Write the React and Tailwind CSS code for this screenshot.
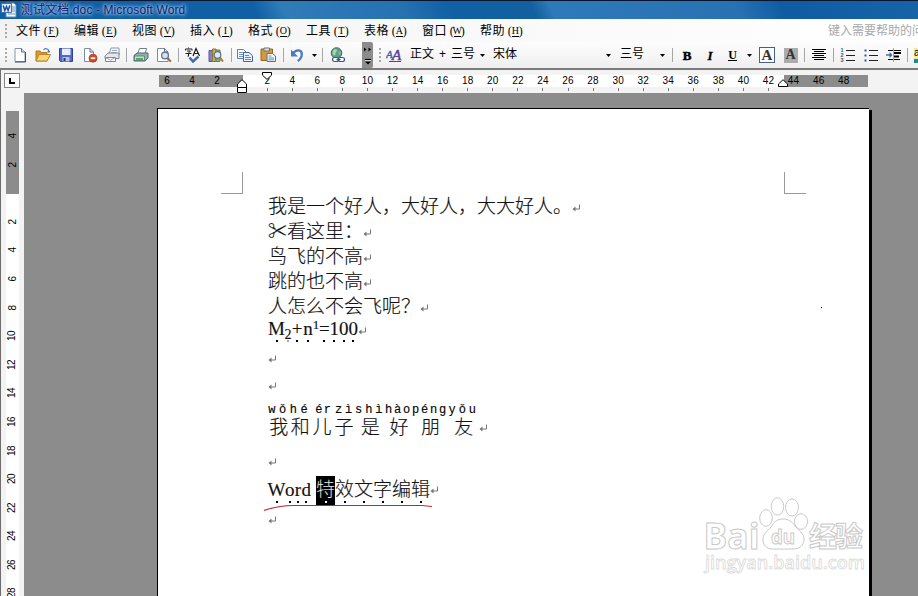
const UI_FONT = "font-['Liberation_Sans','Noto_Sans_CJK_SC',sans-serif]";
const DOC_FONT = "font-['Liberation_Serif','Noto_Sans_CJK_SC',serif]";

const menus = [
  { label: "文件", key: "F" },
  { label: "编辑", key: "E" },
  { label: "视图", key: "V" },
  { label: "插入", key: "I" },
  { label: "格式", key: "O" },
  { label: "工具", key: "T" },
  { label: "表格", key: "A" },
  { label: "窗口", key: "W" },
  { label: "帮助", key: "H" },
];

const hRuler = [6, 4, 2, 0];
for (let n = 2; n <= 48; n += 2) hRuler.push(n);

const vRuler = [4, 2, 0];
for (let n = 2; n <= 28; n += 2) vRuler.push(n);

const pinyin = [
  { char: "我", py: ["w", "ǒ"], width: "w-[21.5px]" },
  { char: "和", py: ["h", "é"], width: "w-[21.5px]" },
  { char: "儿", py: ["é", "r"], width: "w-[22px]", shift: "pl-[5px]" },
  { char: "子", py: ["z", "ì"], width: "w-[22px]", shift: "pl-[2px]" },
  { char: "是", py: ["s", "h", "ì"], width: "w-[30.5px]" },
  { char: "好", py: ["h", "à", "o"], width: "w-[27px]" },
  { char: "朋", py: ["p", "é", "n", "g"], width: "w-[36px]" },
  { char: "友", py: ["y", "ǒ", "u"], width: "w-[30.5px]" },
];

const Icon = ({ children, className = "w-4 h-4" }) => (
  <svg viewBox="0 0 16 16" className={`${className} shrink-0`} fill="none">
    {children}
  </svg>
);

const Slot = ({ w, children }) => (
  <div className={`${w} h-full shrink-0 flex items-center justify-center`}>
    {children}
  </div>
);

const Sep = () => <div className="w-px h-[14px] shrink-0 bg-[#a5a5a5]" />;

const Grip = () => (
  <div className="flex flex-col gap-[2px] shrink-0">
    {[0, 1, 2, 3].map((i) => (
      <div key={i} className="w-[2px] h-[2px] bg-[#a8a8a8]" />
    ))}
  </div>
);

const Arrow = () => (
  <svg viewBox="0 0 5 3" className="w-[5px] h-[3px] shrink-0">
    <path d="M0 0h5L2.5 3z" fill="#000" />
  </svg>
);

const TitleBar = () => (
  <div className="h-[19px] shrink-0 border-t border-[#06142e] bg-[linear-gradient(65deg,#1160a5_0%,#1160a5_28%,#2f7cb9_31%,#2671b0_44%,#1160a5_49%,#12609f_58%,#2e79b7_60%,#2872b3_80%,#0f5ca2_85%,#1663a8_100%)] flex items-center">
    <svg viewBox="0 0 16 16" className="w-4 h-4 ml-px shrink-0">
      <path d="M5 1h8l2 2v12H5z" fill="#f4f9ff" stroke="#6188b2" />
      <path d="M11 5h3M11 7h3M11 9h3M7 12h7" stroke="#6f91b5" />
      <path d="M.5 1.5h10v9H.5z" fill="#dcecfb" stroke="#3e73aa" />
      <path
        d="M2.2 3.5l1.6 5 1.7-4 1.6 4 1.7-5"
        stroke="#1d4a8e"
        strokeWidth="1.4"
        fill="none"
      />
    </svg>
    <span className="ml-1 text-[12px] leading-none tracking-[0.1px] whitespace-pre text-[#081a6b] [text-shadow:0_0_2px_#a9c9ec,0_0_4px_#a9c9ec,0_0_4px_#8fbbe6]">
      测试文档.doc - Microsoft Word
    </span>
  </div>
);

const MenuBar = () => (
  <div className="h-[23px] shrink-0 flex items-center pl-[5px] bg-gradient-to-r from-[#f2f2f2] to-white text-[12px] leading-none text-black">
    <Grip />
    <div className="flex ml-[9px]">
      {menus.map((m) => (
        <div key={m.key} className="w-[58px] flex items-center">
          <span className="tracking-[0.4px]">{m.label}</span>
          <span className="flex ml-[3px] font-['Liberation_Serif'] text-[12px]">
            <span className="w-[4px] text-center">(</span>
            <span className="w-[7px] flex justify-center border-b border-black h-[12px] text-[10px] leading-[12px]">
              {m.key}
            </span>
            <span className="w-[4px] text-center">)</span>
          </span>
        </div>
      ))}
    </div>
    <span className="ml-[290px] text-[#a9a9a9] whitespace-nowrap">
      键入需要帮助的问题
    </span>
  </div>
);

const Toolbar = () => (
  <div className="h-[26px] shrink-0 flex items-center bg-gradient-to-b from-[#fdfdfd] to-[#efefef] text-black overflow-hidden">
    <div className="w-2 pl-[5px] shrink-0">
      <Grip />
    </div>
    <Slot w="w-[23px]">
      <Icon>
        <path d="M3 1.5h6.5l3.5 3.5v9.5H3z" fill="#fff" stroke="#8494ad" />
        <path d="M13.5 5v10H3" stroke="#3d4d68" />
        <path d="M9.5 1.5V5H13" stroke="#60718e" fill="#d6dfec" />
      </Icon>
    </Slot>
    <Slot w="w-[24px]">
      <Icon>
        <path d="M1 14V4h4l1.5 1.5H12V14z" fill="#d99a2b" stroke="#b47b1d" />
        <path d="M1 14l3-6.5h11.5L12 14z" fill="#fbd677" stroke="#b9862a" />
        <path d="M8.5 3c1.5-2 4.5-1.6 5.3 1" stroke="#3f76ba" strokeWidth="1.2" />
        <path d="M12 4h3.4l-1.6 2z" fill="#3f76ba" />
      </Icon>
    </Slot>
    <Slot w="w-[22px]">
      <Icon>
        <path d="M1.5 1.5h13v13h-12l-1-1z" fill="#5468c8" stroke="#3141a0" />
        <path d="M4 1.5h8.5V8H4z" fill="#e9eefc" />
        <path d="M4.5 10h7v4.5h-7z" fill="#b9c2d8" />
        <path d="M5.5 11h2v3h-2z" fill="#26337c" />
      </Icon>
    </Slot>
    <Slot w="w-[25px]">
      <Icon>
        <path d="M2.5 1.5H8L11.5 5v9.5h-9z" fill="#fff" stroke="#7d8ca5" />
        <path d="M8 1.5V5h3.5" stroke="#5f6f8b" />
        <circle cx="11" cy="11.2" r="4" fill="#d94a26" stroke="#a5321a" strokeWidth=".7" />
        <path d="M8.8 11.2h4.4" stroke="#fff" strokeWidth="1.7" />
      </Icon>
    </Slot>
    <Slot w="w-[20px]">
      <Icon>
        <path d="M5 7l2-6h8v7z" fill="#f6f8fb" stroke="#8d97a6" />
        <path d="M8 3.5h5M7.5 5.5h5" stroke="#9aa9bb" />
        <path d="M1 9l3-3h11v5.5H1z" fill="#e4e7ec" stroke="#7d8795" />
        <path d="M1.5 10.5h10v4h-10z" fill="#fff" stroke="#7d8795" />
        <path d="M1.5 10.5l5 2.7 5-2.7" stroke="#9aa1ad" />
      </Icon>
    </Slot>
    <div className="w-1 shrink-0" />
    <Sep />
    <Slot w="w-[27px]">
      <Icon>
        <path d="M4.5 7l2-5.5h7L12 7z" fill="#fff" stroke="#6f7f8e" />
        <path d="M1 8.5L4 6h11v5l-3 3H1z" fill="#8fb5ae" stroke="#476a68" />
        <path d="M1.5 9h10v4.5h-10z" fill="#c5dcd6" stroke="#476a68" strokeWidth=".7" />
        <path d="M3 12h7" stroke="#35a03a" strokeWidth="1.6" />
      </Icon>
    </Slot>
    <Slot w="w-[20px]">
      <Icon>
        <path d="M1.5 1.5h7L12 5v9.5H1.5z" fill="#fff" stroke="#7d8ca5" />
        <path d="M8.5 1.5V5H12" stroke="#5f6f8b" />
        <circle cx="9" cy="8.5" r="3.4" fill="#cfe3f2" stroke="#5d7082" strokeWidth="1.2" />
        <path d="M11.5 11l3.3 3.6" stroke="#9b6a3c" strokeWidth="2" />
      </Icon>
    </Slot>
    <div className="w-1 shrink-0" />
    <Sep />
    <Slot w="w-[27px]">
      <Icon>
        <path
          d="M3.5 0.5v1M.5 3.5V2h6.5v1.5M2 4h3.5L3.5 6v3.2H2.500M.5 6.500h6"
          stroke="#1c1c1c"
        />
        <path d="M8 9l3-7.500L14.500 9M9 6.500h4.500" stroke="#1c1c1c" strokeWidth="1.2" />
        <path d="M4.500 10.500l3.500 4 5.500-5" stroke="#3c6aa8" strokeWidth="2.4" />
      </Icon>
    </Slot>
    <Slot w="w-[19px]">
      <Icon>
        <path d="M1 3.500h3.500v11H1z" fill="#8582c4" stroke="#5b58a0" />
        <path d="M4.500 2h3.500v12.500H4.500z" fill="#c9ad62" stroke="#8d7432" />
        <path d="M8 3h4v11.500H8z" fill="#8fae7c" stroke="#62814f" />
        <circle cx="9.500" cy="8" r="3.300" fill="#dcecf5" stroke="#5f6f80" strokeWidth="1.200" />
        <path d="M12 10.500l3 4" stroke="#a87a35" strokeWidth="2" />
      </Icon>
    </Slot>
    <div className="w-[6px] shrink-0" />
    <Sep />
    <Slot w="w-[26px]">
      <Icon>
        <path d="M.5 2.500h6l3 3v6h-9z" fill="#fff" stroke="#5a7db8" />
        <path d="M2 5.500h4M2 7.500h5M2 9.500h4" stroke="#6f92cb" />
        <path d="M6.500 5.500h5.500l3.500 3.300v5.700h-9z" fill="#eef4ff" stroke="#3f66aa" />
        <path d="M8 8.500h4M8 10.500h6M8 12.500h6" stroke="#5f86c6" />
      </Icon>
    </Slot>
    <Slot w="w-[20px]">
      <Icon>
        <path d="M1 2h11.500v11.500H1z" fill="#d59a35" stroke="#96661b" />
        <path d="M4 1h5.500v3H4z" fill="#dfe3ea" stroke="#6c7078" />
        <path d="M7 6.500h5.500L15.500 9v5.500H7z" fill="#f4f8ff" stroke="#5a6d93" />
        <path d="M8.500 9h3M8.500 11h5.500M8.500 12.800h5.500" stroke="#6f8dc0" />
      </Icon>
    </Slot>
    <div className="w-[5px] shrink-0" />
    <Sep />
    <Slot w="w-[26px]">
      <Icon>
        <path
          d="M4 6.500C7 2 13 2.500 12.800 7.500c-.1 2.800-1.800 5-4 6.500"
          stroke="#4a7cc4"
          strokeWidth="2.300"
        />
        <path d="M2 2.500v7h7z" fill="#4a7cc4" />
      </Icon>
    </Slot>
    <Slot w="w-2">
      <Arrow />
    </Slot>
    <div className="w-1 shrink-0" />
    <Sep />
    <Slot w="w-[28px]">
      <Icon>
        <circle cx="7.500" cy="6" r="5.300" fill="#5f9f8a" stroke="#37705f" />
        <path d="M4 3.500c2-2 4-1.500 4 0S6 5 6.500 7 4 8.500 3.500 7z" fill="#a9d6a8" />
        <path d="M9.500 4c1.500 0 2.500 1 2.300 3L10 8z" fill="#84b9cf" />
        <rect x="3.500" y="10.500" width="6" height="4" rx="2" fill="#fff" stroke="#39537a" strokeWidth="1.200" />
        <rect x="9.500" y="10.500" width="6" height="4" rx="2" fill="#fff" stroke="#39537a" strokeWidth="1.200" />
        <path d="M7.500 12.500h4" stroke="#39537a" strokeWidth="1.200" />
      </Icon>
    </Slot>
    <div className="w-[11px] shrink-0" />
    <div className="w-[11px] h-full shrink-0 bg-[#8c8c8c] rounded-r-[2px]">
      <svg viewBox="0 0 11 26" className="w-[11px] h-[26px]">
        <path d="M2 5.500l2.500 2L2 9.500zM6.500 5.500l2.500 2-2.500 2z" fill="#000" />
        <path d="M3 17.500h6" stroke="#000" strokeWidth="1.200" />
        <path d="M3 19.500h6l-3 3z" fill="#000" />
        <path d="M3 18.600h6" stroke="#fff" strokeWidth=".8" />
      </svg>
    </div>
    <div className="w-[4px] shrink-0" />
    <div className="w-[4px] shrink-0 pl-[2px]">
      <Grip />
    </div>
    <Slot w="w-[26px]">
      <svg viewBox="0 0 16 16" className="w-4 h-4">
        <text x="0" y="11" fontSize="11" fontStyle="italic" fontFamily="Liberation Serif" fill="#3f62a5" stroke="#3f62a5" strokeWidth=".4">
          A
        </text>
        <text x="6" y="13" fontSize="15" fontStyle="italic" fontFamily="Liberation Serif" fill="#5a3f96" stroke="#5a3f96" strokeWidth=".5">
          A
        </text>
        <path d="M3 14.500h12" stroke="#5a3f96" />
      </svg>
    </Slot>
    <div className="w-[3px] shrink-0" />
    <div className="w-[65px] shrink-0 flex justify-between pb-[3px] text-[12px] leading-none">
      <span>正文</span>
      <span>+</span>
      <span>三号</span>
    </div>
    <Slot w="w-[15px]">
      <Arrow />
    </Slot>
    <div className="w-[112px] shrink-0 pl-[3px] pb-[3px] text-[12px] leading-none">
      宋体
    </div>
    <Slot w="w-3">
      <Arrow />
    </Slot>
    <div className="w-[42px] shrink-0 pl-[6px] pb-[3px] text-[12px] leading-none">
      三号
    </div>
    <Slot w="w-3">
      <Arrow />
    </Slot>
    <div className="w-1 shrink-0" />
    <Sep />
    <Slot w="w-[28px]">
      <b className="font-['Liberation_Serif'] text-[13px] leading-none [-webkit-text-stroke:0.5px_#000]">
        B
      </b>
    </Slot>
    <Slot w="w-[18px]">
      <b className="font-['Liberation_Serif'] text-[13px] leading-none italic [-webkit-text-stroke:0.3px_#000]">
        I
      </b>
    </Slot>
    <Slot w="w-[27px]">
      <b className="font-['Liberation_Serif'] text-[12px] leading-[10px] border-b border-black">
        U
      </b>
    </Slot>
    <Slot w="w-[7px]">
      <Arrow />
    </Slot>
    <div className="w-1 shrink-0" />
    <Slot w="w-[20px]">
      <b className="w-4 h-4 border border-[#44618d] bg-white flex items-center justify-center font-['Liberation_Serif'] text-[15px] leading-none text-[#333]">
        A
      </b>
    </Slot>
    <Slot w="w-[27px]">
      <b className="w-[14px] h-[15px] bg-[#acacac] flex items-center justify-center font-['Liberation_Serif'] text-[14px] leading-none text-[#333]">
        A
      </b>
    </Slot>
    <Sep />
    <Slot w="w-[28px]">
      <Icon>
        <path d="M1 2.500h14M3 4.500h10M1 6.500h14M3 8.500h10M1 10.500h14M3 12.500h10" stroke="#000" />
      </Icon>
    </Slot>
    <Sep />
    <Slot w="w-[27px]">
      <Icon>
        <path d="M6 3.500h9M6 8.500h9M6 13.500h9" stroke="#222" />
        <g fontSize="5.500" fontFamily="Liberation Sans" fontWeight="bold" fill="#33588f">
          <text x="0.500" y="5">1</text>
          <text x="0.500" y="10">2</text>
          <text x="0.500" y="15">3</text>
        </g>
      </Icon>
    </Slot>
    <Slot w="w-[20px]">
      <Icon>
        <path d="M6 3.500h9M6 8.500h9M6 13.500h9" stroke="#222" />
        <path d="M1.500 2.500h2v2h-2zM1.500 7.500h2v2h-2zM1.500 12.500h2v2h-2z" fill="#33588f" />
      </Icon>
    </Slot>
    <Slot w="w-[26px]">
      <Icon>
        <path d="M2 3.500h5M8 3.500h7M2 12.500h5M8 12.500h6" stroke="#000" />
        <path d="M8 6h7M8 9.500h5" stroke="#000" strokeWidth="1.800" />
        <path d="M0 8h4" stroke="#3c66a3" strokeWidth="1.400" />
        <path d="M3.500 5l3 3-3 3z" fill="#3c66a3" />
        <path d="M7.500 1.500v13" stroke="#555" strokeDasharray="1 1" />
      </Icon>
    </Slot>
    <Sep />
    <div className="ml-[6px] w-4 h-[15px] shrink-0 bg-[#f0ec9c] border-b-4 border-[#1f8a8a] text-[10px] leading-none">
      a
    </div>
  </div>
);

const HorizontalRuler = () => (
  <div className="h-[23px] shrink-0 flex items-start bg-[#f3f3f3] border-l border-[#6d6d6d]">
    <div className="ml-[3px] mt-[3px] w-4 h-[15px] shrink-0 border border-[#858585] bg-[#fbfbfb] flex items-center justify-center">
      <div className="w-[6px] h-[6px] border-l-2 border-b-2 border-black" />
    </div>
    <div className="relative ml-[139px] mt-[5px] w-[709px] h-3 shrink-0 bg-[linear-gradient(90deg,#8c8c8c_84px,#fff_84px,#fff_625px,#8c8c8c_625px)]">
      <div className="flex -ml-[4.5px]">
        {hRuler.map((n, i) => (
          <div
            key={i}
            className="w-[25.07px] shrink-0 flex flex-col items-center text-[10px] leading-[12px] tracking-[0.2px] text-black"
          >
            <span className="h-3">{n === 0 ? "" : n}</span>
            {i > 3 && i < 25 && <div className="mt-px w-px h-[3px] bg-[#777]" />}
          </div>
        ))}
      </div>
      {/* indent markers */}
      <svg viewBox="0 0 10 14" className="absolute left-[78px] top-[4px] w-[10px] h-[14px]">
        <path d="M.5 8.500V5L5 .7 9.500 5v8.500h-9zM.5 8.500h9" fill="#fff" stroke="#000" />
      </svg>
      <svg viewBox="0 0 10 8" className="absolute left-[103px] -top-[3px] w-[10px] h-2">
        <path d="M.5.5h9v2.700L5 7.400.5 3.200z" fill="#fff" stroke="#000" />
      </svg>
      <svg viewBox="0 0 10 8" className="absolute left-[619px] top-[4px] w-[10px] h-2">
        <path d="M.5 7.500V5L5 .7 9.500 5v2.500z" fill="#fff" stroke="#000" />
      </svg>
    </div>
  </div>
);

const VerticalRuler = () => (
  <div className="w-6 shrink-0 bg-[#f3f3f3] border-l border-[#6d6d6d] pl-[5px]">
    <div className="mt-[18px] w-[13px] h-[485px] overflow-hidden bg-[linear-gradient(180deg,#8c8c8c_83px,#fff_83px)] pt-[10.7px]">
      {vRuler.map((n, i) => (
        <div key={i} className="h-[28.6px] flex items-center justify-center">
          <span className="-rotate-90 text-[10px] leading-none tracking-[-0.5px] text-black">
            {n === 0 ? "" : n}
          </span>
        </div>
      ))}
    </div>
  </div>
);

const Return = ({ className = "" }) => (
  <svg viewBox="0 0 8 8" className={`w-2 h-2 shrink-0 ${className}`}>
    <path d="M7.500.5v4.500h-6" fill="none" stroke="#777" />
    <path d="M3.500 2.500v5L.5 5z" fill="#777" />
  </svg>
);

const Line = ({ text }) => (
  <div className="h-[25px] flex items-center">
    <span className="whitespace-nowrap pt-px">{text}</span>
    <Return className="mt-1" />
  </div>
);

// character with an emphasis dot beneath
const Dotted = ({ children, w, className = "", dot = "bg-black" }) => (
  <span className={`${w} flex flex-col items-center justify-center shrink-0 ${className}`}>
    <span className="h-[22px] leading-[22px]">{children}</span>
    <span className={`w-[2px] h-[2px] ${dot}`} />
  </span>
);

const Brand = () => (
  <svg viewBox="0 0 170 86" className="absolute left-[544px] top-[384px] w-[170px] h-[86px]">
    <g fill="#fff" stroke="#c9c9c9" strokeWidth="1">
      <ellipse cx="64" cy="25" rx="6.300" ry="8.300" />
      <ellipse cx="75.500" cy="13.500" rx="6.200" ry="8.700" />
      <ellipse cx="90" cy="14.500" rx="6.500" ry="8.500" />
      <ellipse cx="99" cy="28.500" rx="6.500" ry="7.800" />
      <path d="M81 26c6 0 9 3 12 7 3 4 9 7 9 13 0 7-5 10-11 10H71c-7 0-10-4-10-10 0-6 5-8 8-12 3-5 6-8 12-8z" />
      <text x="1.500" y="55.500" fontSize="36" fontWeight="bold" fontFamily="Open Sans" textLength="56" lengthAdjust="spacingAndGlyphs">
        Bai
      </text>
      <text x="69" y="51" fontSize="20" fontWeight="bold" fontFamily="Open Sans" textLength="24" lengthAdjust="spacingAndGlyphs">
        du
      </text>
      <text x="107" y="53.500" fontSize="28" fontWeight="bold" fontFamily="Noto Sans CJK SC" textLength="54">
        经验
      </text>
      <text x="3" y="76" fontSize="18" fontWeight="600" fontFamily="Open Sans" stroke="#dadada" strokeWidth=".8" textLength="160" lengthAdjust="spacingAndGlyphs">
        jingyan.baidu.com
      </text>
    </g>
  </svg>
);

const Page = () => (
  <div className="relative mt-[15px] ml-[133px] w-[712px] h-[500px] shrink-0 bg-white border-l border-t border-black shadow-[3px_2px_0_0_#000]">
    {/* crop marks */}
    <div className="flex justify-between pt-[63px] px-[63px]">
      <div className="w-[22px] h-[22px] border-r border-b border-[#9a9a9a]" />
      <div className="w-[22px] h-[22px] border-l border-b border-[#9a9a9a]" />
    </div>
    <div className={`-mt-[1px] pl-[110px] text-[19px] leading-none font-light text-[#111] [-webkit-text-stroke:0.15px_#111] ${DOC_FONT}`}>
      <Line text="我是一个好人，大好人，大大好人。" />
      <Line text="✂看这里：" />
      <Line text="鸟飞的不高" />
      <Line text="跳的也不高" />
      <Line text="人怎么不会飞呢？" />

      <div className="h-[27px] flex items-start font-normal">
        <Dotted w="w-[17px]">M</Dotted>
        <Dotted w="w-[6px]" dot="bg-[#aaa]">
          <sub className="text-[14px] leading-none">2</sub>
        </Dotted>
        <Dotted w="w-[12px]">+</Dotted>
        <Dotted w="w-[10px]">n</Dotted>
        <Dotted w="w-[6px]" dot="bg-transparent">
          <sup className="text-[13px] leading-none">1</sup>
        </Dotted>
        <Dotted w="w-[10.500px]">=</Dotted>
        <Dotted w="w-[9.500px]">1</Dotted>
        <Dotted w="w-[9.500px]">0</Dotted>
        <Dotted w="w-[9.500px]">0</Dotted>
        <Return className="mt-[9px]" />
      </div>
      <div className="h-[27px] flex items-center">
        <Return />
      </div>
      <div className="h-[27px] flex items-center">
        <Return />
      </div>

      <div className="h-[49px] pt-[3px] flex items-start">
        {pinyin.map((p) => (
          <div key={p.char} className={`${p.width} shrink-0 flex flex-col items-center`}>
            <div
              className={`w-full h-[15px] flex -ml-[3px] font-['Liberation_Mono'] font-normal text-[12px] leading-[16px] text-black ${p.shift || ""}`}
            >
              {p.py.map((c, i) => (
                <span key={i} className="flex-1 text-center">
                  {c}
                </span>
              ))}
            </div>
            <span className="leading-[22px]">{p.char}</span>
          </div>
        ))}
        <Return className="mt-[22px]" />
      </div>
      <div className="h-[28px] flex items-center">
        <Return />
      </div>

      <div className="h-[30px] flex items-stretch">
        <Dotted w="w-[17px]">W</Dotted>
        <Dotted w="w-[9.500px]">o</Dotted>
        <Dotted w="w-[7px]">r</Dotted>
        <Dotted w="w-[9.500px]">d</Dotted>
        <span className="w-[5px]" />
        <Dotted w="w-[19px]" className="bg-black text-white" dot="bg-white">
          特
        </Dotted>
        {["效", "文", "字", "编", "辑"].map((c) => (
          <Dotted key={c} w="w-[19px]">
            {c}
          </Dotted>
        ))}
        <Return className="mt-[10px]" />
      </div>
      <div className="h-[28px] flex items-center">
        <Return />
      </div>
    </div>

    {/* hand-drawn underline */}
    <svg viewBox="0 0 170 8" className="absolute left-[106px] top-[395px] w-[170px] h-2">
      <path d="M0 6.500C10 3 20 1.500 30 1.500h128l10 1" fill="none" stroke="#c0282e" strokeWidth="1.200" />
    </svg>
    <div className="absolute left-[663px] top-[198px] w-px h-px bg-black" />
    <Brand />
  </div>
);

const App = () => {
  return (
    <div className={`w-[918px] h-[596px] overflow-hidden flex flex-col bg-[#f3f3f3] ${UI_FONT}`}>
      <TitleBar />
      <MenuBar />
      <Toolbar />
      <div className="h-[2px] shrink-0 bg-[#7b7b7b]" />
      <HorizontalRuler />
      <div className="flex-1 min-h-0 flex overflow-hidden">
        <VerticalRuler />
        <div className="flex-1 min-w-0 flex bg-[#8c8c8c] overflow-hidden">
          <Page />
        </div>
      </div>
    </div>
  );
};

export default App;
